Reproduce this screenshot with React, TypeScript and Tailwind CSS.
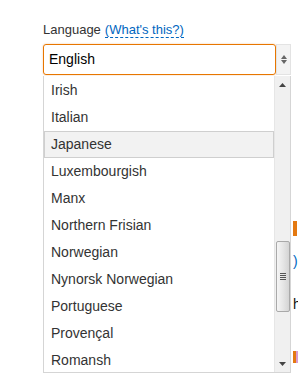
import React from 'react';

const languages = [
    'Irish',
    'Italian',
    'Japanese',
    'Luxembourgish',
    'Manx',
    'Northern Frisian',
    'Norwegian',
    'Nynorsk Norwegian',
    'Portuguese',
    'Provençal',
    'Romansh',
];

const App: React.FC = () => {
    const selected = 'Japanese';

    return (
        <div className="relative w-[298px] h-[381px] overflow-hidden bg-white font-['Liberation_Sans'] text-[#333]">
            <div className="pl-[43px] pt-[22px]">
                <div className="flex items-center gap-1 text-[13px] leading-[16px]">
                    <span>Language</span>
                    <a className="text-[#0066c0] border-b border-dashed border-[#0066c0] leading-[15px]">(What's this?)</a>
                </div>
                <div className="mt-[6px] flex h-[31px]">
                    <div className="flex w-[233px] items-center rounded-[3px] border border-[#e77600] pl-[5px] text-[14px] text-black shadow-[0_0_2px_rgba(228,121,17,0.4)]">
                        English
                    </div>
                    <div className="flex w-[15px] flex-col items-center justify-center gap-[1px] border border-[#e3e3e3] bg-[#f3f3f3]">
                        <svg width="6" height="4" viewBox="0 0 6 4"><path d="M0 4L3 0L6 4Z" fill="#666" /></svg>
                        <svg width="6" height="4" viewBox="0 0 6 4"><path d="M0 0L3 4L6 0Z" fill="#666" /></svg>
                    </div>
                </div>
            </div>

            {/* page content peeking out behind the open list */}
            <div className="ml-[293px] mt-[146px] flex flex-col text-[14px] leading-none">
                <div className="h-[15px] w-[4px] bg-[#e47911]" />
                <span className="mt-[18px] text-[#0066c0]">)</span>
                <span className="mt-[29px] w-[5px] overflow-hidden text-[#111]">h</span>
                <div className="mt-[40px] flex">
                    <div className="h-[12px] w-[3px] bg-[#e47911]" />
                    <div className="h-[12px] w-[2px] bg-[#d89bd0]" />
                </div>
            </div>

            <div className="absolute left-[43px] top-[76px] flex h-[297px] w-[248px] border border-t-0 border-[#d5d5d5] bg-white">
                <ul className="flex-1 pt-[1px]">
                    {languages.map((lang) => (
                        <li
                            key={lang}
                            className={
                                lang === selected
                                    ? 'flex h-[27px] items-center border border-[#cfcfcf] bg-[#f2f2f2] pl-[6px] text-[14px]'
                                    : 'flex h-[27px] items-center border border-transparent pl-[6px] text-[14px]'
                            }
                        >
                            {lang}
                        </li>
                    ))}
                </ul>
                <div className="flex w-[16px] flex-col items-center border-l border-[#e6e6e6] bg-[#f0f0f0]">
                    <div className="flex h-[17px] items-center justify-center">
                        <svg width="7" height="4" viewBox="0 0 7 4"><path d="M0 4L3.5 0L7 4Z" fill="#444" /></svg>
                    </div>
                    <div className="flex-1" />
                    <div className="mb-[43px] flex h-[71px] w-[14px] items-center justify-center rounded-[2px] border border-[#a9a9a9] bg-gradient-to-r from-[#f5f5f5] via-[#e6e6e6] to-[#d4d4d4]">
                        <div className="flex flex-col gap-[1px]">
                            <div className="h-[1px] w-[6px] bg-[#555]" />
                            <div className="h-[1px] w-[6px] bg-[#555]" />
                            <div className="h-[1px] w-[6px] bg-[#555]" />
                            <div className="h-[1px] w-[6px] bg-[#555]" />
                        </div>
                    </div>
                    <div className="flex h-[17px] items-center justify-center">
                        <svg width="7" height="4" viewBox="0 0 7 4"><path d="M0 0L3.5 4L7 0Z" fill="#444" /></svg>
                    </div>
                </div>
            </div>
        </div>
    );
};

export default App;
